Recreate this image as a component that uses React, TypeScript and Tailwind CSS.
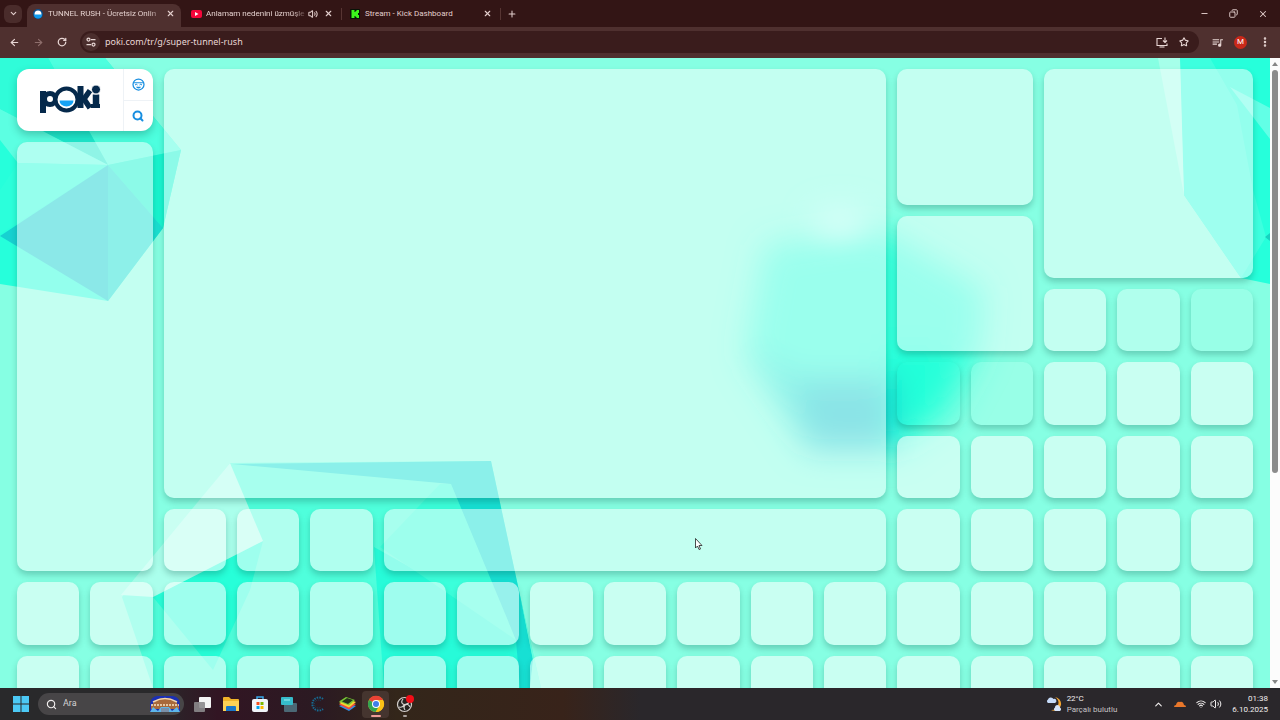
import React from "react";
import { ArrowLeft, ArrowRight, ChevronDown, ChevronUp, Copy, EllipsisVertical, Minus, Plus, RotateCw, Search, Star, Volume2, Wifi, X } from "lucide-react";
import { MdOutlineQueueMusic } from "react-icons/md";

type Tile = { span: string; fill?: string };

const SQUARE = "col-span-1";

const bigTiles: Tile[] = [
  { span: "col-start-3 col-span-10 row-start-1 row-span-6" },
  { span: "col-start-13 col-span-2 row-start-1 row-span-2" },
  { span: "col-start-13 col-span-2 row-start-3 row-span-2" },
  { span: "col-start-15 col-span-3 row-start-1 row-span-3" },
  { span: "col-start-1 col-span-2 row-start-2 row-span-6" },
  { span: "col-start-6 col-span-7 row-start-7" },
];

// order matters, the grid fills the free cells row by row
const smallTiles: Tile[] = [
  { span: SQUARE },
  { span: SQUARE, fill: "bg-white/35" },
  { span: SQUARE, fill: "bg-white/15" },
  { span: SQUARE, fill: "bg-white/0" },
  { span: SQUARE, fill: "bg-white/15" },
  { span: SQUARE },
  ...Array.from({ length: 49 }, () => ({ span: SQUARE, fill: "bg-white/55" })),
];

const TileBox = ({ span, fill = "bg-white/50" }: Tile) => (
  <a href="#" aria-label="Oyun" className={`${span} ${fill} block rounded-[10px] shadow-[0_4px_6px_rgba(0,60,50,0.24)]`} />
);

const Backdrop = () => (
  <svg className="absolute inset-0 h-full w-full" viewBox="0 58 1270 630" preserveAspectRatio="xMinYMin slice" aria-hidden="true">
    <defs>
      <filter id="soft" x="-30%" y="-30%" width="160%" height="160%">
        <feGaussianBlur stdDeviation="16" />
      </filter>
      <filter id="softer" x="-80%" y="-120%" width="260%" height="340%">
        <feGaussianBlur stdDeviation="14" />
      </filter>
    </defs>
    {/* top left crystal */}
    <path d="M0 58H105L181 150L163 228L108 301L0 284Z" fill="#26ffdb" />
    <path d="M48 58H105L181 150L108 165Z" fill="#4dffdf" />
    <path d="M0 109L80 115L108 165Z" fill="#1fe8cd" />
    <path d="M0 58H48L80 115L43 132L0 109Z" fill="#30fcd9" />
    <path d="M0 109L108 165L18 163L0 140Z" fill="#5cffe2" />
    <path d="M108 165L18 163L0 190V234Z" fill="#2bffdb" />
    <path d="M108 165L181 150L163 228Z" fill="#18f5d0" />
    <path d="M108 165L0 236L108 301Z" fill="#17d1d1" />
    <path d="M108 165L163 228L108 301Z" fill="#1ae0d2" />
    {/* top right crystal */}
    <path d="M1180 58H1270V284L1241 278L1184 195Z" fill="#26ffdb" />
    <path d="M1180 58H1210L1237 105L1253 190L1266 237L1241 278L1184 195Z" fill="#3dffdf" />
    <path d="M1158 58H1180L1184 195Z" fill="#a6ffea" />
    <path d="M1230 87L1270 108V139Z" fill="#62ffe6" />
    <path d="M1265 237L1270 233V241Z" fill="#17d1c0" />
    {/* bottom crystal */}
    <path d="M230 463L491 461L521 600L541 688H153L122 597Z" fill="#4fffdc" />
    <path d="M153 597L263 541L250 590L213 670Z" fill="#27ffd9" />
    <path d="M374 547L513 625L530 688H384Z" fill="#27fbd9" />
    <path d="M451 484L516 640L380 547L440 484Z" fill="#3bffdb" />
    <path d="M232 464L491 461L521 600L533 660L530 688H520L516 640L451 484Z" fill="#17e0d4" />
    <path d="M521 600L533 660L530 688H541Z" fill="#67ffe0" />
    <path d="M230 463L263 541L153 597L121 595Z" fill="#aaffec" />
    {/* out of focus crystal */}
    <g filter="url(#soft)">
      <path d="M765 245L880 228L985 290L980 350L945 415L895 450H808L745 355Z" fill="#36ffdb" />
      <path d="M880 345H950L940 405L900 450L870 450Z" fill="#20ffd9" />
      <path d="M748 345L808 448L840 440L810 385Z" fill="#1ce0d2" />
      <path d="M800 378H892V450H808Z" fill="#12c8ce" />
    </g>
    <ellipse cx="840" cy="222" rx="30" ry="16" fill="#a8fff0" filter="url(#softer)" />
  </svg>
);

const PokiLogo = () => (
  <svg className="h-8 w-[62px]" viewBox="0 0 62 32" role="img" aria-label="Poki">
    <g fill="none" stroke="#05294b">
      <path d="M4 7V29" strokeWidth="6" />
      <circle cx="11" cy="15" r="5.500" strokeWidth="5" />
      <path d="M41.500 2V24" strokeWidth="6" />
      <path d="M51 6.500L45 15L51 24" strokeWidth="5.500" />
      <path d="M57 10.500V24" strokeWidth="6.500" />
      <path d="M52 22H61" strokeWidth="4" />
    </g>
    <circle cx="57" cy="5.500" r="4.500" fill="#05294b" stroke="#fff" strokeWidth="1" />
    <circle cx="27.500" cy="15.500" r="11" fill="#fff" stroke="#05294b" strokeWidth="4" />
    <path d="M20.500 16.500H34.500A7 6 0 0 1 20.500 16.500Z" fill="#16a3f5" />
  </svg>
);

const PokiFavicon = () => (
  <svg className="size-[10px] shrink-0" viewBox="0 0 20 20" aria-hidden="true">
    <circle cx="10" cy="10" r="8.500" fill="#fff" stroke="#0a4f8c" strokeWidth="3" />
    <path d="M2 11H18A8 8 0 0 1 2 11Z" fill="#0f9bee" />
  </svg>
);

const WindowTabs = () => (
  <header className="flex h-[27px] items-center bg-[#331515] text-[8px] text-[#e3cfcd]">
    <button aria-label="Sekme ara" className="ml-1 flex size-[18px] items-center justify-center rounded-md bg-[#4a2c2b]">
      <ChevronDown size={9} strokeWidth={3} />
    </button>
    <div className="ml-[5px] mt-1 flex h-[23px] w-[154px] items-center rounded-t-lg bg-[#4f302f] pl-[6px] pr-[6px] pb-1">
      <PokiFavicon />
      <span className="ml-[5px] flex-1 whitespace-nowrap mask-r-from-85%">TUNNEL RUSH - Ücretsiz Onlin</span>
      <button aria-label="Kapat"><X size={9} strokeWidth={3} /></button>
    </div>
    <div className="flex h-[23px] w-[160px] items-center pl-[10px]">
      <svg className="h-2 w-[11px] shrink-0" viewBox="0 0 22 16" aria-hidden="true">
        <rect width="22" height="16" rx="4" fill="#f5063a" />
        <path d="M8 4L15 8L8 12Z" fill="#fff" />
      </svg>
      <span className="ml-1 w-[102px] whitespace-nowrap mask-r-from-85%">Anlamam nedenini üzmüşle</span>
      <button aria-label="Sesi kapat"><Volume2 size={10} strokeWidth={2.5} /></button>
      <button aria-label="Kapat" className="ml-[6px]"><X size={9} strokeWidth={3} /></button>
    </div>
    <div className="flex h-3 w-[160px] items-center border-x border-[#573533] pl-2">
      <svg className="size-[10px] shrink-0" viewBox="0 0 20 20" aria-hidden="true">
        <rect width="20" height="20" rx="2" fill="#071306" />
        <path d="M3 2H9V6H11V4H13V2H18V8H16V12H18V18H13V16H11V14H9V18H3Z" fill="#3bf51c" />
      </svg>
      <span className="ml-[5px] flex-1 whitespace-nowrap">Stream - Kick Dashboard</span>
      <button aria-label="Kapat" className="mr-2"><X size={9} strokeWidth={3} /></button>
    </div>
    <button aria-label="Yeni sekme" className="ml-[6px]"><Plus size={10} strokeWidth={2.5} /></button>
    <div className="ml-auto mr-3 flex items-center gap-5">
      <button aria-label="Simge durumuna küçült"><Minus size={9} strokeWidth={2.5} /></button>
      <button aria-label="Geri yükle"><Copy size={9} strokeWidth={2.5} className="-scale-x-100" /></button>
      <button aria-label="Pencereyi kapat"><X size={10} strokeWidth={2.5} /></button>
    </div>
  </header>
);

const InstallIcon = () => (
  <svg className="h-[11px] w-3" viewBox="0 0 24 22" fill="none" stroke="currentColor" strokeWidth="2.200" aria-hidden="true">
    <path d="M12 3H2V17H22V13" />
    <path d="M7 20H17" />
    <path d="M18 1V10M14 7L18 11L22 7" />
  </svg>
);

const Toolbar = () => (
  <div className="flex h-[31px] items-center bg-[#4f302f] pb-px text-[#e8d6d4]">
    <div className="ml-[9px] flex items-center gap-[13px]">
      <button aria-label="Geri"><ArrowLeft size={11} strokeWidth={2.5} /></button>
      <button aria-label="İleri" className="text-[#8e6e6c]"><ArrowRight size={11} strokeWidth={2.5} /></button>
      <button aria-label="Yenile"><RotateCw size={10} strokeWidth={3} /></button>
    </div>
    <div className="ml-[13px] flex h-[22px] flex-1 items-center rounded-full bg-[#3a1c1c] pl-[2px] pr-[10px]">
      <button aria-label="Site bilgileri" className="flex size-[18px] items-center justify-center rounded-full bg-[#4b2e2d]">
        <svg className="size-[10px]" viewBox="0 0 20 20" fill="none" stroke="currentColor" strokeWidth="2.500" aria-hidden="true">
          <circle cx="5" cy="5" r="3" />
          <path d="M10 5H19M1 15H10" />
          <circle cx="15" cy="15" r="3" />
        </svg>
      </button>
      <input aria-label="Adres" defaultValue="poki.com/tr/g/super-tunnel-rush" className="ml-[5px] flex-1 bg-transparent font-['Noto_Sans'] text-[9px] outline-none" />
      <button aria-label="Uygulamayı yükle"><InstallIcon /></button>
      <button aria-label="Yer işareti" className="ml-[11px]"><Star size={10} strokeWidth={2.5} /></button>
    </div>
    <div className="ml-3 mr-[9px] flex items-center">
      <button aria-label="Medya"><MdOutlineQueueMusic size={13} /></button>
      <button aria-label="Profil" className="ml-[10px] flex size-[13px] items-center justify-center rounded-full bg-[#c9291a] text-[8px] text-white">M</button>
      <button aria-label="Menü" className="ml-3"><EllipsisVertical size={12} strokeWidth={3} /></button>
    </div>
  </div>
);

const PokiNav = () => (
  <nav className="col-span-2 col-start-1 row-start-1 flex rounded-[12px] bg-white shadow-[0_4px_8px_rgba(0,60,50,0.28)]">
    <a href="#" className="flex flex-1 items-center justify-center"><PokiLogo /></a>
    <div className="flex w-[30px] flex-col border-l border-[#eef2f6] text-[#178ee0]">
      <button aria-label="Profilim" className="flex flex-1 items-center justify-center border-b border-[#eef2f6]">
        <svg className="size-[13px]" viewBox="0 0 26 26" fill="none" stroke="currentColor" strokeWidth="2.500" aria-hidden="true">
          <circle cx="13" cy="13" r="11" />
          <path d="M3 9.500H23" strokeWidth="2" />
          <path d="M6 14Q8.500 11 11 14M15 14Q17.500 11 20 14" strokeWidth="2" />
          <path d="M8 17.500H18Q17 21 13 21Q9 21 8 17.500Z" fill="currentColor" stroke="none" />
        </svg>
      </button>
      <button aria-label="Ara" className="flex flex-1 items-center justify-center"><Search size={12} strokeWidth={4} /></button>
    </div>
  </nav>
);

const Scrollbar = () => (
  <div className="flex w-[10px] shrink-0 flex-col items-center bg-[#fcfcfc] py-1">
    <svg className="h-1 w-[6px]" viewBox="0 0 6 4" aria-hidden="true"><path d="M3 0L6 4H0Z" fill="#868686" /></svg>
    <div className="mt-1 flex-1">
      <div className="h-[66%] w-[6px] rounded-full bg-[#8b8b8b]" />
    </div>
    <svg className="h-1 w-[6px]" viewBox="0 0 6 4" aria-hidden="true"><path d="M0 0H6L3 4Z" fill="#868686" /></svg>
  </div>
);

const StartIcon = () => (
  <svg className="size-4" viewBox="0 0 16 16" aria-hidden="true">
    <path d="M0 0H7.500V7.500H0ZM8.500 0H16V7.500H8.500ZM0 8.500H7.500V16H0ZM8.500 8.500H16V16H8.500Z" fill="#4cc9f5" />
  </svg>
);

// little bridge picture inside the search box
const SearchArt = () => (
  <svg className="h-[18px] w-8" viewBox="0 0 32 18" aria-hidden="true">
    <path d="M8 1H24Q31 2 31 10V16H1V10Q1 2 8 1Z" fill="#1b2fb4" />
    <path d="M2 11L6 6L12 3H21L27 7L30 11V14H2Z" fill="#a8693a" />
    <path d="M4 7Q16 0 28 7" fill="none" stroke="#f1d6b0" strokeWidth="1.500" />
    <path d="M2 10H30" stroke="#f7e3c4" strokeWidth="1.500" strokeDasharray="2 1" />
    <path d="M1 17L4 12L9 16L12 12H20L23 16L28 12L31 17Z" fill="#5db6ea" />
    <path d="M12 13H20V17H12Z" fill="#7b8fa8" />
  </svg>
);

const apps = [
  {
    name: "Görev görünümü",
    art: (
      <>
        <rect x="6" y="2" width="12" height="11" rx="1" fill="#f4f4f4" />
        <rect x="1" y="7" width="11" height="10" rx="1" fill="#8c8a8c" opacity="0.9" />
      </>
    ),
  },
  {
    name: "Dosya Gezgini",
    art: (
      <>
        <path d="M1 3Q1 2 2 2H7L9 4H16Q17 4 17 5V16H1Z" fill="#f0b429" />
        <path d="M1 6H17V16H1Z" fill="#fdd255" />
        <path d="M4 16V12Q4 11 5 11H13Q14 11 14 12V16Z" fill="#1976c8" />
      </>
    ),
  },
  {
    name: "Microsoft Store",
    art: (
      <>
        <path d="M6 5V2H12V5" fill="none" stroke="#39a9ea" strokeWidth="1.500" />
        <rect x="1" y="4" width="16" height="13" rx="2" fill="#f1f5fa" />
        <path d="M5.500 7H8.500V10H5.500Z" fill="#f25022" />
        <path d="M9.500 7H12.500V10H9.500Z" fill="#7fba00" />
        <path d="M5.500 11H8.500V14H5.500Z" fill="#00a4ef" />
        <path d="M9.500 11H12.500V14H9.500Z" fill="#ffb900" />
      </>
    ),
  },
  {
    name: "Uzak Masaüstü",
    art: (
      <>
        <rect x="4" y="8" width="13" height="9" rx="1" fill="#4b6875" />
        <rect x="1" y="2" width="12" height="8" rx="1" fill="#36bccb" />
        <path d="M4 5H10" stroke="#9ef0f3" strokeWidth="1" />
      </>
    ),
  },
  {
    name: "Ccleaner",
    art: (
      <>
        <path d="M14 4A6.500 6.500 0 1 0 14 14" fill="none" stroke="#176b93" strokeWidth="2" strokeDasharray="1.500 1" />
        <path d="M12 6A4 4 0 1 0 12 12" fill="none" stroke="#124863" strokeWidth="1" strokeDasharray="1 1" />
      </>
    ),
  },
  {
    name: "BlueStacks",
    art: (
      <>
        <path d="M1 11L11 16L18 11L9 8Z" fill="#2f8fe8" />
        <path d="M1 9.500L11 14.500L18 9L9 6Z" fill="#ef4b3e" />
        <path d="M1 8L11 12.500L18 7L9 4Z" fill="#f7d532" />
        <path d="M1 6.500L11 10.500L17 5L8 2Z" fill="#7ccb35" />
        <path d="M4 6.500L10 9L15 5L9 3Z" fill="#24361b" />
      </>
    ),
  },
  {
    name: "Google Chrome",
    active: true,
    art: (
      <>
        <circle cx="9" cy="9" r="8" fill="#fbc116" />
        <path d="M9 9L2 5A8 8 0 0 1 16 5Z" fill="#e94235" />
        <path d="M9 9L2 5A8 8 0 0 0 8.500 17L12.500 10.500Z" fill="#31a552" />
        <path d="M9 5H16A8 8 0 0 1 9 17L12.500 11Z" fill="#fbc116" />
        <circle cx="9" cy="9" r="4" fill="#fff" />
        <circle cx="9" cy="9" r="3" fill="#3f7ee8" />
      </>
    ),
  },
  {
    name: "OBS Studio",
    dot: true,
    art: (
      <>
        <circle cx="8.500" cy="9.500" r="7" fill="#26221f" stroke="#d5d0cd" strokeWidth="1.200" />
        <path d="M7 4Q4 8 8 9.500Q12 9.500 13 7" fill="none" stroke="#d5d0cd" strokeWidth="1.200" />
        <path d="M14 12Q12 8 9 10Q7 12 9 15M3 12Q7 13 8 10" fill="none" stroke="#d5d0cd" strokeWidth="1.200" />
        <circle cx="14" cy="4" r="4" fill="#f30d17" />
      </>
    ),
  },
];

const Taskbar = () => (
  <footer className="flex h-8 shrink-0 items-center bg-[linear-gradient(90deg,#29292b_12%,#321523_17%,#2b1a22_25%,#33261a_31%,#38231a_44%,#2a272b_50%)] text-[8px] text-[#f1eeee]">
    <button aria-label="Başlat" className="ml-[13px]"><StartIcon /></button>
    <label className="ml-[9px] flex h-[22px] w-[146px] items-center rounded-full bg-[#474547] pl-2 pr-[3px]">
      <Search size={11} strokeWidth={2.5} />
      <input aria-label="Ara" placeholder="Ara" className="ml-[6px] w-0 flex-1 bg-transparent text-[9px] outline-none placeholder:text-[#d4d2d4]" />
      <SearchArt />
    </label>
    <div className="ml-[3px] flex items-center">
      {apps.map((app) => (
        <button key={app.name} aria-label={app.name} className={`mx-[1px] flex h-[27px] w-[27px] flex-col items-center rounded-sm pt-[4px] ${app.active ? "bg-[#45352f]" : ""}`}>
          <svg className="size-[18px]" viewBox="0 0 18 18" aria-hidden="true">{app.art}</svg>
          {app.active && <span className="mt-[2px] h-[2px] w-[10px] rounded-full bg-[#f09c97]" />}
          {app.dot && <span className="mt-[2px] h-[2px] w-1 rounded-full bg-[#a8a09c]" />}
        </button>
      ))}
    </div>
    <button className="ml-auto flex items-center gap-[5px] text-left leading-[11px]">
      <svg className="size-4" viewBox="0 0 16 16" aria-hidden="true">
        <path d="M9 1A7 7 0 0 1 5 14A7 7 0 0 0 15 9A7 7 0 0 0 9 1Z" fill="#f5a631" />
        <path d="M2 7A2 2 0 0 1 2 3.500A3 3 0 0 1 7.500 3A2 2 0 0 1 9 7Z" fill="#c6dbf9" />
        <path d="M9 15A2 2 0 0 1 9 11.500A2.500 2.500 0 0 1 14 11.500A2 2 0 0 1 14 15Z" fill="#d6e5fb" />
      </svg>
      <span>22°C<br /><span className="text-[#c5c2c4]">Parçalı bulutlu</span></span>
    </button>
    <div className="ml-9 flex items-center">
      <button aria-label="Gizli simgeler"><ChevronUp size={11} strokeWidth={2.5} /></button>
      <svg className="ml-[10px] h-[7px] w-3" viewBox="0 0 12 7" aria-hidden="true">
        <path d="M0 6Q0 4 2 4Q3 0 6 1Q9 0 10 4Q12 4 12 6Z" fill="#e8772b" />
      </svg>
      <button aria-label="Ağ ve ses" className="ml-[10px] flex items-center gap-1">
        <Wifi size={10} strokeWidth={2.5} />
        <Volume2 size={12} strokeWidth={2} />
      </button>
    </div>
    <button className="ml-[10px] mr-3 text-right leading-[11px]">01:38<br />6.10.2025</button>
  </footer>
);

const App = () => {
  return (
    <div className="flex h-screen flex-col overflow-hidden font-[Roboto,'Noto_Sans',sans-serif]">
      <WindowTabs />
      <Toolbar />
      <div className="flex min-h-0 flex-1">
        <main className="relative flex-1 overflow-hidden bg-[#86ffe3] pl-[17px] pr-[17px] pt-[11px]">
          <Backdrop />
          <div className="@container relative">
            <div className="grid auto-rows-[calc((100cqw-176px)/17)] grid-cols-17 gap-[11px]">
              <PokiNav />
              {bigTiles.map((tile) => (
                <TileBox key={tile.span} {...tile} />
              ))}
              {smallTiles.map((tile, i) => (
                <TileBox key={i} {...tile} />
              ))}
            </div>
          </div>
          <svg className="absolute left-[695px] top-[480px] h-3 w-2" viewBox="0 0 8 12" aria-hidden="true">
            <path d="M0.500 0.500V10L2.500 8L4 11.500L5.500 11L4 7.500H7Z" fill="#fff" stroke="#222" strokeWidth="0.800" />
          </svg>
        </main>
        <Scrollbar />
      </div>
      <Taskbar />
    </div>
  );
};

export default App;
